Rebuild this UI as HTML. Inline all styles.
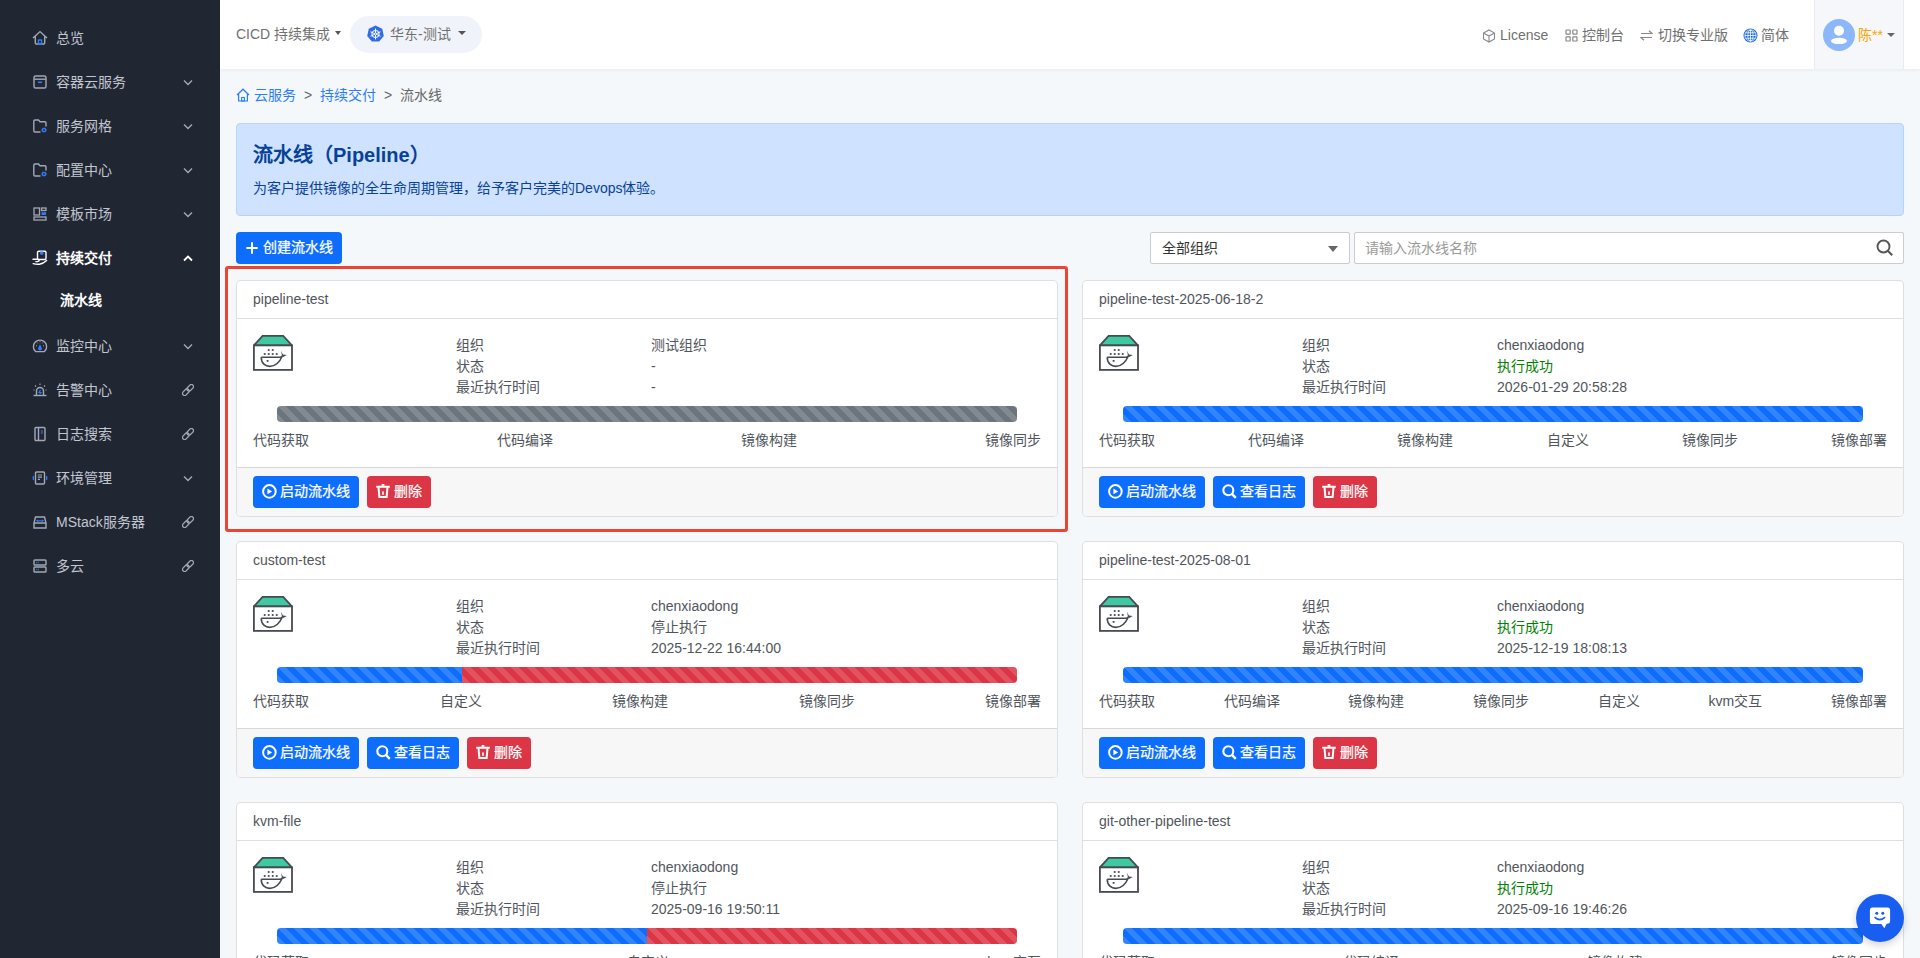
<!DOCTYPE html>
<html lang="zh-CN"><head><meta charset="utf-8">
<style>
*{box-sizing:border-box;margin:0;padding:0}
html,body{width:1920px;height:958px;overflow:hidden}
body{font-family:"Liberation Sans",sans-serif;font-size:14px;background:#f5f8fb;position:relative;color:#50555c}
.abs{position:absolute}
svg{display:block}
#side{left:0;top:0;width:220px;height:958px;background:#212633}
.mi{position:absolute;left:0;width:220px;height:22px;color:#c1c6d0;font-size:14px;line-height:22px;white-space:nowrap}
.mi .ic{position:absolute;left:32px;top:3px}
.mi .tx{position:absolute;left:56px;top:0}
.mi .ch{position:absolute;left:183px;top:8px}
.mi .lk{position:absolute;left:182px;top:5px}
.mi.act{color:#fff;font-weight:bold}
#hdr{left:220px;top:0;width:1700px;height:69px;background:#fff;box-shadow:0 1px 4px rgba(0,0,0,.06)}
.ht{position:absolute;top:24px;line-height:20px;color:#707070;font-size:14px;white-space:nowrap}
.caret{position:absolute;width:0;height:0;border-left:3.5px solid transparent;border-right:3.5px solid transparent;border-top:4px solid #555}
.bc{position:absolute;top:85px;line-height:20px;font-size:14px;white-space:nowrap}
#jumbo{left:236px;top:123px;width:1668px;height:93px;background:#cfe2ff;border:1px solid #b6d4fe;border-radius:4px}
#jumbo .h1{position:absolute;left:16px;top:19px;font-size:20px;line-height:24px;font-weight:bold;color:#084298;white-space:nowrap}
#jumbo .p{position:absolute;left:16px;top:54px;font-size:14px;line-height:20px;color:#084298;white-space:nowrap}
.btn{position:absolute;height:32px;border-radius:4px;color:#fff;font-size:14px;line-height:21px;padding:5px 9px 5px 8px;white-space:nowrap}
.btn svg{display:inline-block;vertical-align:-3px;margin-right:3px;margin-left:1px}
.bp{background:#0d6efd}
.btn{-webkit-text-stroke:0.25px #fff}
.bd{background:#dc3545}
.card{position:absolute;width:822px;height:237px;background:#fff;border:1px solid rgba(0,0,0,.125);border-radius:5px;overflow:hidden}
.card .hd{position:absolute;left:0;top:0;width:100%;height:38px;border-bottom:1px solid rgba(0,0,0,.125);padding:8px 16px;line-height:21px;color:#50555c;white-space:nowrap}
.card .ft{position:absolute;left:0;top:186px;width:100%;height:51px;border-top:1px solid rgba(0,0,0,.125);background:#f7f7f7}
.card .logo{position:absolute;left:16px;top:54px}
.card .lb{position:absolute;left:219px;line-height:21px;white-space:nowrap}
.card .vl{position:absolute;left:414px;line-height:21px;white-space:nowrap}
.ok{color:#008000}
.prog{position:absolute;left:40px;top:125px;width:740px;height:16px;border-radius:4px;overflow:hidden;background:#e9ecef;display:flex}
.prog div{height:16px;background-image:linear-gradient(45deg,rgba(255,255,255,.15) 25%,transparent 25%,transparent 50%,rgba(255,255,255,.15) 50%,rgba(255,255,255,.15) 75%,transparent 75%,transparent);background-size:16px 16px}
.pg{background-color:#6c757d}
.pb{background-color:#0d6efd}
.pr{background-color:#dc3545}
.steps{position:absolute;left:16px;top:149px;width:788px;display:flex;justify-content:space-between;line-height:21px;white-space:nowrap}
.card .btn{top:8px}
</style></head><body>

<div id="side" class="abs">
<div class="mi" style="top:27px"><div class="ic"><svg width="16" height="16" viewBox="0 0 16 16" ><path d="M1 8 L8 1.6 L15 8 M3.3 6.3 V13 Q3.3 14 4.3 14 H11.7 Q12.7 14 12.7 13 V6.3" fill="none" stroke="#a3a9b4" stroke-width="1.4"/><rect x="6.5" y="10" width="3" height="4" fill="none" stroke="#2f7cf6" stroke-width="1.4"/></svg></div><div class="tx">总览</div></div>
<div class="mi" style="top:71px"><div class="ic"><svg width="16" height="16" viewBox="0 0 16 16" ><rect x="2" y="2" width="12" height="12" rx="1.6" fill="none" stroke="#a3a9b4" stroke-width="1.4"/><path d="M2 5.2 H14" stroke="#a3a9b4" stroke-width="1.4"/><path d="M6 8.3 H10" stroke="#2f7cf6" stroke-width="1.6"/></svg></div><div class="tx">容器云服务</div><div class="ch"><svg width="10" height="7" viewBox="0 0 10 7" ><path d="M1 1.5 L5 5.5 L9 1.5" fill="none" stroke="#a3a9b4" stroke-width="1.4"/></svg></div></div>
<div class="mi" style="top:115px"><div class="ic"><svg width="16" height="16" viewBox="0 0 16 16" ><path d="M8.5 14 H3 Q1.8 14 1.8 12.8 V3.2 Q1.8 2 3 2 H6.5 L8 3.8 H12.8 Q14 3.8 14 5 V8.5" fill="none" stroke="#a3a9b4" stroke-width="1.4"/><path d="M10.6 9.8 H13.4 L14.8 12 L13.4 14.2 H10.6 L9.2 12 Z" fill="#2f7cf6"/><circle cx="12" cy="12" r="0.9" fill="#212633"/></svg></div><div class="tx">服务网格</div><div class="ch"><svg width="10" height="7" viewBox="0 0 10 7" ><path d="M1 1.5 L5 5.5 L9 1.5" fill="none" stroke="#a3a9b4" stroke-width="1.4"/></svg></div></div>
<div class="mi" style="top:159px"><div class="ic"><svg width="16" height="16" viewBox="0 0 16 16" ><path d="M8.5 14 H3 Q1.8 14 1.8 12.8 V3.2 Q1.8 2 3 2 H6.5 L8 3.8 H12.8 Q14 3.8 14 5 V8.5" fill="none" stroke="#a3a9b4" stroke-width="1.4"/><path d="M10.6 9.8 H13.4 L14.8 12 L13.4 14.2 H10.6 L9.2 12 Z" fill="#2f7cf6"/><circle cx="12" cy="12" r="0.9" fill="#212633"/></svg></div><div class="tx">配置中心</div><div class="ch"><svg width="10" height="7" viewBox="0 0 10 7" ><path d="M1 1.5 L5 5.5 L9 1.5" fill="none" stroke="#a3a9b4" stroke-width="1.4"/></svg></div></div>
<div class="mi" style="top:203px"><div class="ic"><svg width="16" height="16" viewBox="0 0 16 16" ><rect x="2" y="2" width="5.5" height="7" fill="none" stroke="#a3a9b4" stroke-width="1.3"/><rect x="9.5" y="2" width="4.5" height="2.5" fill="none" stroke="#a3a9b4" stroke-width="1.3"/><rect x="9.5" y="6.2" width="4.5" height="2.8" fill="#2f7cf6"/><rect x="2" y="11" width="12" height="3" fill="none" stroke="#a3a9b4" stroke-width="1.3"/></svg></div><div class="tx">模板市场</div><div class="ch"><svg width="10" height="7" viewBox="0 0 10 7" ><path d="M1 1.5 L5 5.5 L9 1.5" fill="none" stroke="#a3a9b4" stroke-width="1.4"/></svg></div></div>
<div class="mi act" style="top:247px"><div class="ic"><svg width="16" height="16" viewBox="0 0 16 16" ><rect x="5.5" y="1.2" width="8.5" height="8.3" rx="1.3" fill="none" stroke="#fff" stroke-width="1.4"/><path d="M8 1.6 H11.5 V3.2 A1.75 1.75 0 0 1 8 3.2 Z" fill="#2f7cf6"/><path d="M1 9.3 H5.2 Q7.2 9.3 7.2 10.6 Q7.2 11.6 5.2 11.6 H3.8 M1.2 13.6 Q4 14.4 7.5 14.2 Q11 14 14.6 10.6" fill="none" stroke="#fff" stroke-width="1.4" stroke-linecap="round"/></svg></div><div class="tx">持续交付</div><div class="ch"><svg width="10" height="7" viewBox="0 0 10 7" ><path d="M1 5.5 L5 1.5 L9 5.5" fill="none" stroke="#fff" stroke-width="1.8"/></svg></div></div>
<div class="mi" style="top:335px"><div class="ic"><svg width="16" height="16" viewBox="0 0 16 16" ><path d="M3.6 13.6 A6.6 6.6 0 1 1 12.4 13.6 Z" fill="none" stroke="#a3a9b4" stroke-width="1.4"/><path d="M8 6.2 L9.9 10 A2 2 0 1 1 6.1 10 Z" fill="#2f7cf6"/><path d="M4 7.5 L4.9 8 M8 3.3 V4.3 M12 7.5 L11.1 8 M5.2 4.6 L5.8 5.3 M10.8 4.6 L10.2 5.3" stroke="#a3a9b4" stroke-width="1"/></svg></div><div class="tx">监控中心</div><div class="ch"><svg width="10" height="7" viewBox="0 0 10 7" ><path d="M1 1.5 L5 5.5 L9 1.5" fill="none" stroke="#a3a9b4" stroke-width="1.4"/></svg></div></div>
<div class="mi" style="top:379px"><div class="ic"><svg width="16" height="16" viewBox="0 0 16 16" ><path d="M4.5 13 V9 A3.5 3.5 0 0 1 11.5 9 V13" fill="none" stroke="#a3a9b4" stroke-width="1.4"/><path d="M1.5 13.5 H14.5" stroke="#a3a9b4" stroke-width="1.4"/><path d="M8.5 8 L7 10.5 H9 L7.5 12.5" fill="none" stroke="#2f7cf6" stroke-width="1.1"/><path d="M3 3.5 L4 4.5 M8 1.5 V3 M13 3.5 L12 4.5 M1.5 8 H2.5 M13.5 8 H14.5" stroke="#a3a9b4" stroke-width="1.1"/></svg></div><div class="tx">告警中心</div><div class="lk"><svg width="12" height="12" viewBox="0 0 12 12" ><g fill="none" stroke="#a3a9b4" stroke-width="1.3"><rect x="0.05" y="6.1" width="7.5" height="4.2" rx="2.1" transform="rotate(-45 3.8 8.2)"/><rect x="4.45" y="1.7" width="7.5" height="4.2" rx="2.1" transform="rotate(-45 8.2 3.8)"/></g></svg></div></div>
<div class="mi" style="top:423px"><div class="ic"><svg width="16" height="16" viewBox="0 0 16 16" ><rect x="3" y="1.5" width="10" height="13" rx="1" fill="none" stroke="#a3a9b4" stroke-width="1.4"/><path d="M6.5 1.5 V14.5" stroke="#a3a9b4" stroke-width="1.4"/><path d="M8.8 5 H11 M8.8 7 H11" stroke="#2f7cf6" stroke-width="1.2"/></svg></div><div class="tx">日志搜索</div><div class="lk"><svg width="12" height="12" viewBox="0 0 12 12" ><g fill="none" stroke="#a3a9b4" stroke-width="1.3"><rect x="0.05" y="6.1" width="7.5" height="4.2" rx="2.1" transform="rotate(-45 3.8 8.2)"/><rect x="4.45" y="1.7" width="7.5" height="4.2" rx="2.1" transform="rotate(-45 8.2 3.8)"/></g></svg></div></div>
<div class="mi" style="top:467px"><div class="ic"><svg width="16" height="16" viewBox="0 0 16 16" ><rect x="3.5" y="2" width="9" height="12" rx="1" fill="none" stroke="#a3a9b4" stroke-width="1.4"/><path d="M5.8 5 H10 M5.8 7.2 H10 M5.8 9.4 H8" stroke="#a3a9b4" stroke-width="1.2"/><path d="M1.6 6 Q0.8 8 1.6 10 M14.4 6 Q15.2 8 14.4 10" fill="none" stroke="#2f7cf6" stroke-width="1.4"/></svg></div><div class="tx">环境管理</div><div class="ch"><svg width="10" height="7" viewBox="0 0 10 7" ><path d="M1 1.5 L5 5.5 L9 1.5" fill="none" stroke="#a3a9b4" stroke-width="1.4"/></svg></div></div>
<div class="mi" style="top:511px"><div class="ic"><svg width="16" height="16" viewBox="0 0 16 16" ><path d="M2 9 L3.5 3 H12.5 L14 9 V14 H2 Z M2 9 H14" fill="none" stroke="#a3a9b4" stroke-width="1.4"/><path d="M6 6 L5 6.8 L6 7.6 M10 6 L11 6.8 L10 7.6 M5.2 6.8 H10.8" fill="none" stroke="#2f7cf6" stroke-width="1.3"/></svg></div><div class="tx">MStack服务器</div><div class="lk"><svg width="12" height="12" viewBox="0 0 12 12" ><g fill="none" stroke="#a3a9b4" stroke-width="1.3"><rect x="0.05" y="6.1" width="7.5" height="4.2" rx="2.1" transform="rotate(-45 3.8 8.2)"/><rect x="4.45" y="1.7" width="7.5" height="4.2" rx="2.1" transform="rotate(-45 8.2 3.8)"/></g></svg></div></div>
<div class="mi" style="top:555px"><div class="ic"><svg width="16" height="16" viewBox="0 0 16 16" ><rect x="2" y="2" width="12" height="5" rx="0.8" fill="none" stroke="#a3a9b4" stroke-width="1.4"/><rect x="2" y="9" width="12" height="5" rx="0.8" fill="none" stroke="#a3a9b4" stroke-width="1.4"/><path d="M4.3 4.5 H5.3 M6.3 4.5 H7 M4.3 11.5 H5.3 M6.3 11.5 H7" stroke="#2f7cf6" stroke-width="1.3"/></svg></div><div class="tx">多云</div><div class="lk"><svg width="12" height="12" viewBox="0 0 12 12" ><g fill="none" stroke="#a3a9b4" stroke-width="1.3"><rect x="0.05" y="6.1" width="7.5" height="4.2" rx="2.1" transform="rotate(-45 3.8 8.2)"/><rect x="4.45" y="1.7" width="7.5" height="4.2" rx="2.1" transform="rotate(-45 8.2 3.8)"/></g></svg></div></div>
<div class="mi act" style="top:289px"><div class="tx" style="left:60px">流水线</div></div>
</div>
<div id="hdr" class="abs">
<div class="ht" style="left:16px">CICD 持续集成</div><div class="caret" style="left:115px;top:31px"></div>
<div class="abs" style="left:130px;top:16px;width:132px;height:37px;border-radius:19px;background:#f0f4fa"></div>
<div class="abs" style="left:147px;top:25px"><svg width="17" height="17" viewBox="0 0 17 17" ><path d="M8.5 0.6 L15.2 3.8 L16.8 11 L12.2 16.6 H4.8 L0.2 11 L1.8 3.8 Z" fill="#326ce5"/><g fill="none" stroke="#fff" stroke-width="1"><circle cx="8.5" cy="9" r="3.6"/><path d="M8.5 3.6 V14.4 M3.5 6.8 L13.5 11.2 M13.5 6.8 L3.5 11.2"/></g><circle cx="8.5" cy="9" r="1.1" fill="#326ce5" stroke="#fff" stroke-width="0.8"/></svg></div>
<div class="ht" style="left:170px">华东-测试</div><div class="caret" style="left:238px;top:31px;border-left-width:4px;border-right-width:4px"></div>
<div class="abs" style="left:1262px;top:29px"><svg width="14" height="14" viewBox="0 0 14 14" ><g fill="none" stroke="#888" stroke-width="1.1"><path d="M7 1 L12.5 4 V10 L7 13 L1.5 10 V4 Z M1.5 4 L7 7 L12.5 4 M7 7 V13"/></g></svg></div><div class="ht" style="left:1280px;top:25px">License</div>
<div class="abs" style="left:1345px;top:29px"><svg width="13" height="13" viewBox="0 0 13 13" ><g fill="none" stroke="#888" stroke-width="1.2"><rect x="1" y="1" width="4.2" height="4.2" rx="0.6"/><rect x="7.8" y="1" width="4.2" height="4.2" rx="0.6"/><rect x="1" y="7.8" width="4.2" height="4.2" rx="0.6"/><rect x="7.8" y="7.8" width="4.2" height="4.2" rx="0.6"/></g></svg></div><div class="ht" style="left:1362px;top:25px">控制台</div>
<div class="abs" style="left:1420px;top:29px"><svg width="13" height="13" viewBox="0 0 13 13" ><g fill="none" stroke="#888" stroke-width="1.2"><path d="M1 4.5 H12 L9 1.8 M12 8.5 H1 L4 11.2"/></g></svg></div><div class="ht" style="left:1438px;top:25px">切换专业版</div>
<div class="abs" style="left:1523px;top:28px"><svg width="15" height="15" viewBox="0 0 15 15" ><circle cx="7.5" cy="7.5" r="7" fill="#1a66e8"/><g fill="none" stroke="#fff" stroke-width="0.8"><circle cx="7.5" cy="7.5" r="5.6"/><ellipse cx="7.5" cy="7.5" rx="2.6" ry="5.6"/><path d="M7.5 1.9 V13.1 M1.9 7.5 H13.1 M2.6 4.8 H12.4 M2.6 10.2 H12.4"/></g></svg></div><div class="ht" style="left:1541px;top:25px">简体</div>
<div class="abs" style="left:1594px;top:0;width:90px;height:69px;background:#f5f7fa;border-left:1px solid #e8ebf0;border-right:1px solid #e8ebf0"></div>
<div class="abs" style="left:1603px;top:19px"><svg width="32" height="32" viewBox="0 0 32 32" ><circle cx="16" cy="16" r="16" fill="#8cb8fb"/><circle cx="16" cy="11.7" r="5" fill="#fff"/><ellipse cx="16" cy="21.9" rx="8" ry="3.2" fill="#fff"/></svg></div>
<div class="ht" style="left:1638px;top:25px;color:#f7a800">陈**</div><div class="caret" style="left:1667px;top:33px;border-left-width:4px;border-right-width:4px;border-top-color:#666"></div>
</div>
<div class="abs" style="left:236px;top:88px"><svg width="14" height="14" viewBox="0 0 14 14" ><path d="M1 7 L7 1.2 L13 7 M2.6 5.6 V13 H11.4 V5.6" fill="none" stroke="#2b7cfb" stroke-width="1.2"/><rect x="5.6" y="9.5" width="2.8" height="3.5" fill="none" stroke="#2b7cfb" stroke-width="1.1"/></svg></div>
<div class="bc" style="left:254px;color:#2b7cfb">云服务</div>
<div class="bc" style="left:304px;color:#666">&gt;</div>
<div class="bc" style="left:320px;color:#2b7cfb">持续交付</div>
<div class="bc" style="left:384px;color:#666">&gt;</div>
<div class="bc" style="left:400px;color:#666">流水线</div>
<div id="jumbo" class="abs"><div class="h1">流水线（Pipeline）</div><div class="p">为客户提供镜像的全生命周期管理，给予客户完美的Devops体验。</div></div>
<div class="btn bp" style="left:236px;top:232px;width:106px;height:32px;padding:5px 9px 5px 10px"><svg width="12" height="12" viewBox="0 0 12 12" style="margin:0 5px 0 0;vertical-align:-2px"><path d="M6 0.3 V11.7 M0.3 6 H11.7" stroke="#fff" stroke-width="1.9"/></svg>创建流水线</div>
<div class="abs" style="left:1150px;top:232px;width:200px;height:32px;background:#fff;border:1px solid #ccc;border-radius:2px"></div>
<div class="abs" style="left:1162px;top:238px;line-height:20px;color:#333">全部组织</div>
<div class="caret" style="left:1328px;top:246px;border-top-color:#666;border-left-width:5px;border-right-width:5px;border-top-width:6px"></div>
<div class="abs" style="left:1354px;top:232px;width:550px;height:32px;background:#fff;border:1px solid #ccc;border-radius:2px"></div>
<div class="abs" style="left:1365px;top:238px;line-height:20px;color:#999">请输入流水线名称</div>
<div class="abs" style="left:1876px;top:239px"><svg width="18" height="18" viewBox="0 0 18 18" ><circle cx="7.5" cy="7.5" r="6" fill="none" stroke="#555" stroke-width="1.9"/><path d="M11.8 11.8 L16.2 16.2" stroke="#555" stroke-width="2"/></svg></div>
<div class="card" style="left:236px;top:280px">
<div class="hd">pipeline-test</div>
<div class="logo"><svg width="40" height="36" viewBox="0 0 40 36" ><path d="M0.9 10.4 L9.6 0.9 H30.2 L39 10.4 Z" fill="#3ec9a3" stroke="#464a52" stroke-width="1.8"/><rect x="0.9" y="10.4" width="38.1" height="24.5" fill="#fff" stroke="#464a52" stroke-width="1.8"/><g fill="#464a52"><rect x="14.8" y="14.1" width="1.8" height="1.8"/><rect x="18.8" y="14.1" width="1.8" height="1.8"/><rect x="10.8" y="18.1" width="1.8" height="1.8"/><rect x="14.8" y="18.1" width="1.8" height="1.8"/><rect x="18.8" y="18.1" width="1.8" height="1.8"/><rect x="22.8" y="18.1" width="1.8" height="1.8"/><rect x="13.7" y="25" width="1.8" height="1.8"/></g><path d="M8.2 22.3 H26.5 Q28.8 22.3 29.6 20.5 M8.2 22.3 C8.2 28.5 12.5 31.4 16.8 31.4 C22.5 31.4 26.5 27.5 29.6 20.5" fill="none" stroke="#464a52" stroke-width="1.6"/><path d="M28.1 15.8 L29.9 19.6 L33.8 20.1 L30.2 21.9 L28.9 20.6 Z" fill="#464a52"/></svg></div>
<div class="lb" style="top:54px">组织</div><div class="lb" style="top:75px">状态</div><div class="lb" style="top:96px">最近执行时间</div>
<div class="vl" style="top:54px">测试组织</div><div class="vl " style="top:75px">-</div><div class="vl" style="top:96px">-</div>
<div class="prog"><div class="pg" style="width:100%"></div></div>
<div class="steps"><span>代码获取</span><span>代码编译</span><span>镜像构建</span><span>镜像同步</span></div>
<div class="ft">
<div class="btn bp" style="left:16px"><svg width="15" height="15" viewBox="0 0 15 15" ><circle cx="7.4" cy="7.4" r="6.3" fill="none" stroke="#fff" stroke-width="2"/><path d="M5.4 4.6 L10.2 7.4 L5.4 10.2 Z" fill="#fff"/></svg>启动流水线</div>
<div class="btn bd" style="left:130px"><svg width="14" height="14" viewBox="0 0 15 15" style="margin-right:4px;vertical-align:-2px"><path d="M0.2 2.9 H14.8" stroke="#fff" stroke-width="2.2"/><rect x="6" y="0" width="3" height="2" fill="#fff"/><path d="M2.7 3.5 L3.6 13.9 H11.4 L12.3 3.5" fill="none" stroke="#fff" stroke-width="2.2"/><rect x="6.6" y="8" width="1.8" height="3.6" fill="#fff"/></svg>删除</div>
</div></div>
<div class="card" style="left:1082px;top:280px">
<div class="hd">pipeline-test-2025-06-18-2</div>
<div class="logo"><svg width="40" height="36" viewBox="0 0 40 36" ><path d="M0.9 10.4 L9.6 0.9 H30.2 L39 10.4 Z" fill="#3ec9a3" stroke="#464a52" stroke-width="1.8"/><rect x="0.9" y="10.4" width="38.1" height="24.5" fill="#fff" stroke="#464a52" stroke-width="1.8"/><g fill="#464a52"><rect x="14.8" y="14.1" width="1.8" height="1.8"/><rect x="18.8" y="14.1" width="1.8" height="1.8"/><rect x="10.8" y="18.1" width="1.8" height="1.8"/><rect x="14.8" y="18.1" width="1.8" height="1.8"/><rect x="18.8" y="18.1" width="1.8" height="1.8"/><rect x="22.8" y="18.1" width="1.8" height="1.8"/><rect x="13.7" y="25" width="1.8" height="1.8"/></g><path d="M8.2 22.3 H26.5 Q28.8 22.3 29.6 20.5 M8.2 22.3 C8.2 28.5 12.5 31.4 16.8 31.4 C22.5 31.4 26.5 27.5 29.6 20.5" fill="none" stroke="#464a52" stroke-width="1.6"/><path d="M28.1 15.8 L29.9 19.6 L33.8 20.1 L30.2 21.9 L28.9 20.6 Z" fill="#464a52"/></svg></div>
<div class="lb" style="top:54px">组织</div><div class="lb" style="top:75px">状态</div><div class="lb" style="top:96px">最近执行时间</div>
<div class="vl" style="top:54px">chenxiaodong</div><div class="vl ok" style="top:75px">执行成功</div><div class="vl" style="top:96px">2026-01-29 20:58:28</div>
<div class="prog"><div class="pb" style="width:100%"></div></div>
<div class="steps"><span>代码获取</span><span>代码编译</span><span>镜像构建</span><span>自定义</span><span>镜像同步</span><span>镜像部署</span></div>
<div class="ft">
<div class="btn bp" style="left:16px"><svg width="15" height="15" viewBox="0 0 15 15" ><circle cx="7.4" cy="7.4" r="6.3" fill="none" stroke="#fff" stroke-width="2"/><path d="M5.4 4.6 L10.2 7.4 L5.4 10.2 Z" fill="#fff"/></svg>启动流水线</div>
<div class="btn bp" style="left:130px"><svg width="15" height="15" viewBox="0 0 15 15" ><circle cx="6.3" cy="6.3" r="5" fill="none" stroke="#fff" stroke-width="2.1"/><path d="M9.9 9.9 L13.8 13.8" stroke="#fff" stroke-width="2.4"/></svg>查看日志</div>
<div class="btn bd" style="left:230px"><svg width="14" height="14" viewBox="0 0 15 15" style="margin-right:4px;vertical-align:-2px"><path d="M0.2 2.9 H14.8" stroke="#fff" stroke-width="2.2"/><rect x="6" y="0" width="3" height="2" fill="#fff"/><path d="M2.7 3.5 L3.6 13.9 H11.4 L12.3 3.5" fill="none" stroke="#fff" stroke-width="2.2"/><rect x="6.6" y="8" width="1.8" height="3.6" fill="#fff"/></svg>删除</div>
</div></div>
<div class="card" style="left:236px;top:541px">
<div class="hd">custom-test</div>
<div class="logo"><svg width="40" height="36" viewBox="0 0 40 36" ><path d="M0.9 10.4 L9.6 0.9 H30.2 L39 10.4 Z" fill="#3ec9a3" stroke="#464a52" stroke-width="1.8"/><rect x="0.9" y="10.4" width="38.1" height="24.5" fill="#fff" stroke="#464a52" stroke-width="1.8"/><g fill="#464a52"><rect x="14.8" y="14.1" width="1.8" height="1.8"/><rect x="18.8" y="14.1" width="1.8" height="1.8"/><rect x="10.8" y="18.1" width="1.8" height="1.8"/><rect x="14.8" y="18.1" width="1.8" height="1.8"/><rect x="18.8" y="18.1" width="1.8" height="1.8"/><rect x="22.8" y="18.1" width="1.8" height="1.8"/><rect x="13.7" y="25" width="1.8" height="1.8"/></g><path d="M8.2 22.3 H26.5 Q28.8 22.3 29.6 20.5 M8.2 22.3 C8.2 28.5 12.5 31.4 16.8 31.4 C22.5 31.4 26.5 27.5 29.6 20.5" fill="none" stroke="#464a52" stroke-width="1.6"/><path d="M28.1 15.8 L29.9 19.6 L33.8 20.1 L30.2 21.9 L28.9 20.6 Z" fill="#464a52"/></svg></div>
<div class="lb" style="top:54px">组织</div><div class="lb" style="top:75px">状态</div><div class="lb" style="top:96px">最近执行时间</div>
<div class="vl" style="top:54px">chenxiaodong</div><div class="vl " style="top:75px">停止执行</div><div class="vl" style="top:96px">2025-12-22 16:44:00</div>
<div class="prog"><div class="pb" style="width:25%"></div><div class="pr" style="width:75%"></div></div>
<div class="steps"><span>代码获取</span><span>自定义</span><span>镜像构建</span><span>镜像同步</span><span>镜像部署</span></div>
<div class="ft">
<div class="btn bp" style="left:16px"><svg width="15" height="15" viewBox="0 0 15 15" ><circle cx="7.4" cy="7.4" r="6.3" fill="none" stroke="#fff" stroke-width="2"/><path d="M5.4 4.6 L10.2 7.4 L5.4 10.2 Z" fill="#fff"/></svg>启动流水线</div>
<div class="btn bp" style="left:130px"><svg width="15" height="15" viewBox="0 0 15 15" ><circle cx="6.3" cy="6.3" r="5" fill="none" stroke="#fff" stroke-width="2.1"/><path d="M9.9 9.9 L13.8 13.8" stroke="#fff" stroke-width="2.4"/></svg>查看日志</div>
<div class="btn bd" style="left:230px"><svg width="14" height="14" viewBox="0 0 15 15" style="margin-right:4px;vertical-align:-2px"><path d="M0.2 2.9 H14.8" stroke="#fff" stroke-width="2.2"/><rect x="6" y="0" width="3" height="2" fill="#fff"/><path d="M2.7 3.5 L3.6 13.9 H11.4 L12.3 3.5" fill="none" stroke="#fff" stroke-width="2.2"/><rect x="6.6" y="8" width="1.8" height="3.6" fill="#fff"/></svg>删除</div>
</div></div>
<div class="card" style="left:1082px;top:541px">
<div class="hd">pipeline-test-2025-08-01</div>
<div class="logo"><svg width="40" height="36" viewBox="0 0 40 36" ><path d="M0.9 10.4 L9.6 0.9 H30.2 L39 10.4 Z" fill="#3ec9a3" stroke="#464a52" stroke-width="1.8"/><rect x="0.9" y="10.4" width="38.1" height="24.5" fill="#fff" stroke="#464a52" stroke-width="1.8"/><g fill="#464a52"><rect x="14.8" y="14.1" width="1.8" height="1.8"/><rect x="18.8" y="14.1" width="1.8" height="1.8"/><rect x="10.8" y="18.1" width="1.8" height="1.8"/><rect x="14.8" y="18.1" width="1.8" height="1.8"/><rect x="18.8" y="18.1" width="1.8" height="1.8"/><rect x="22.8" y="18.1" width="1.8" height="1.8"/><rect x="13.7" y="25" width="1.8" height="1.8"/></g><path d="M8.2 22.3 H26.5 Q28.8 22.3 29.6 20.5 M8.2 22.3 C8.2 28.5 12.5 31.4 16.8 31.4 C22.5 31.4 26.5 27.5 29.6 20.5" fill="none" stroke="#464a52" stroke-width="1.6"/><path d="M28.1 15.8 L29.9 19.6 L33.8 20.1 L30.2 21.9 L28.9 20.6 Z" fill="#464a52"/></svg></div>
<div class="lb" style="top:54px">组织</div><div class="lb" style="top:75px">状态</div><div class="lb" style="top:96px">最近执行时间</div>
<div class="vl" style="top:54px">chenxiaodong</div><div class="vl ok" style="top:75px">执行成功</div><div class="vl" style="top:96px">2025-12-19 18:08:13</div>
<div class="prog"><div class="pb" style="width:100%"></div></div>
<div class="steps"><span>代码获取</span><span>代码编译</span><span>镜像构建</span><span>镜像同步</span><span>自定义</span><span>kvm交互</span><span>镜像部署</span></div>
<div class="ft">
<div class="btn bp" style="left:16px"><svg width="15" height="15" viewBox="0 0 15 15" ><circle cx="7.4" cy="7.4" r="6.3" fill="none" stroke="#fff" stroke-width="2"/><path d="M5.4 4.6 L10.2 7.4 L5.4 10.2 Z" fill="#fff"/></svg>启动流水线</div>
<div class="btn bp" style="left:130px"><svg width="15" height="15" viewBox="0 0 15 15" ><circle cx="6.3" cy="6.3" r="5" fill="none" stroke="#fff" stroke-width="2.1"/><path d="M9.9 9.9 L13.8 13.8" stroke="#fff" stroke-width="2.4"/></svg>查看日志</div>
<div class="btn bd" style="left:230px"><svg width="14" height="14" viewBox="0 0 15 15" style="margin-right:4px;vertical-align:-2px"><path d="M0.2 2.9 H14.8" stroke="#fff" stroke-width="2.2"/><rect x="6" y="0" width="3" height="2" fill="#fff"/><path d="M2.7 3.5 L3.6 13.9 H11.4 L12.3 3.5" fill="none" stroke="#fff" stroke-width="2.2"/><rect x="6.6" y="8" width="1.8" height="3.6" fill="#fff"/></svg>删除</div>
</div></div>
<div class="card" style="left:236px;top:802px">
<div class="hd">kvm-file</div>
<div class="logo"><svg width="40" height="36" viewBox="0 0 40 36" ><path d="M0.9 10.4 L9.6 0.9 H30.2 L39 10.4 Z" fill="#3ec9a3" stroke="#464a52" stroke-width="1.8"/><rect x="0.9" y="10.4" width="38.1" height="24.5" fill="#fff" stroke="#464a52" stroke-width="1.8"/><g fill="#464a52"><rect x="14.8" y="14.1" width="1.8" height="1.8"/><rect x="18.8" y="14.1" width="1.8" height="1.8"/><rect x="10.8" y="18.1" width="1.8" height="1.8"/><rect x="14.8" y="18.1" width="1.8" height="1.8"/><rect x="18.8" y="18.1" width="1.8" height="1.8"/><rect x="22.8" y="18.1" width="1.8" height="1.8"/><rect x="13.7" y="25" width="1.8" height="1.8"/></g><path d="M8.2 22.3 H26.5 Q28.8 22.3 29.6 20.5 M8.2 22.3 C8.2 28.5 12.5 31.4 16.8 31.4 C22.5 31.4 26.5 27.5 29.6 20.5" fill="none" stroke="#464a52" stroke-width="1.6"/><path d="M28.1 15.8 L29.9 19.6 L33.8 20.1 L30.2 21.9 L28.9 20.6 Z" fill="#464a52"/></svg></div>
<div class="lb" style="top:54px">组织</div><div class="lb" style="top:75px">状态</div><div class="lb" style="top:96px">最近执行时间</div>
<div class="vl" style="top:54px">chenxiaodong</div><div class="vl " style="top:75px">停止执行</div><div class="vl" style="top:96px">2025-09-16 19:50:11</div>
<div class="prog"><div class="pb" style="width:50%"></div><div class="pr" style="width:50%"></div></div>
<div class="steps"><span>代码获取</span><span>自定义</span><span>kvm交互</span></div>
<div class="ft">
<div class="btn bp" style="left:16px"><svg width="15" height="15" viewBox="0 0 15 15" ><circle cx="7.4" cy="7.4" r="6.3" fill="none" stroke="#fff" stroke-width="2"/><path d="M5.4 4.6 L10.2 7.4 L5.4 10.2 Z" fill="#fff"/></svg>启动流水线</div>
<div class="btn bp" style="left:130px"><svg width="15" height="15" viewBox="0 0 15 15" ><circle cx="6.3" cy="6.3" r="5" fill="none" stroke="#fff" stroke-width="2.1"/><path d="M9.9 9.9 L13.8 13.8" stroke="#fff" stroke-width="2.4"/></svg>查看日志</div>
<div class="btn bd" style="left:230px"><svg width="14" height="14" viewBox="0 0 15 15" style="margin-right:4px;vertical-align:-2px"><path d="M0.2 2.9 H14.8" stroke="#fff" stroke-width="2.2"/><rect x="6" y="0" width="3" height="2" fill="#fff"/><path d="M2.7 3.5 L3.6 13.9 H11.4 L12.3 3.5" fill="none" stroke="#fff" stroke-width="2.2"/><rect x="6.6" y="8" width="1.8" height="3.6" fill="#fff"/></svg>删除</div>
</div></div>
<div class="card" style="left:1082px;top:802px">
<div class="hd">git-other-pipeline-test</div>
<div class="logo"><svg width="40" height="36" viewBox="0 0 40 36" ><path d="M0.9 10.4 L9.6 0.9 H30.2 L39 10.4 Z" fill="#3ec9a3" stroke="#464a52" stroke-width="1.8"/><rect x="0.9" y="10.4" width="38.1" height="24.5" fill="#fff" stroke="#464a52" stroke-width="1.8"/><g fill="#464a52"><rect x="14.8" y="14.1" width="1.8" height="1.8"/><rect x="18.8" y="14.1" width="1.8" height="1.8"/><rect x="10.8" y="18.1" width="1.8" height="1.8"/><rect x="14.8" y="18.1" width="1.8" height="1.8"/><rect x="18.8" y="18.1" width="1.8" height="1.8"/><rect x="22.8" y="18.1" width="1.8" height="1.8"/><rect x="13.7" y="25" width="1.8" height="1.8"/></g><path d="M8.2 22.3 H26.5 Q28.8 22.3 29.6 20.5 M8.2 22.3 C8.2 28.5 12.5 31.4 16.8 31.4 C22.5 31.4 26.5 27.5 29.6 20.5" fill="none" stroke="#464a52" stroke-width="1.6"/><path d="M28.1 15.8 L29.9 19.6 L33.8 20.1 L30.2 21.9 L28.9 20.6 Z" fill="#464a52"/></svg></div>
<div class="lb" style="top:54px">组织</div><div class="lb" style="top:75px">状态</div><div class="lb" style="top:96px">最近执行时间</div>
<div class="vl" style="top:54px">chenxiaodong</div><div class="vl ok" style="top:75px">执行成功</div><div class="vl" style="top:96px">2025-09-16 19:46:26</div>
<div class="prog"><div class="pb" style="width:100%"></div></div>
<div class="steps"><span>代码获取</span><span>代码编译</span><span>镜像构建</span><span>镜像同步</span></div>
<div class="ft">
<div class="btn bp" style="left:16px"><svg width="15" height="15" viewBox="0 0 15 15" ><circle cx="7.4" cy="7.4" r="6.3" fill="none" stroke="#fff" stroke-width="2"/><path d="M5.4 4.6 L10.2 7.4 L5.4 10.2 Z" fill="#fff"/></svg>启动流水线</div>
<div class="btn bp" style="left:130px"><svg width="15" height="15" viewBox="0 0 15 15" ><circle cx="6.3" cy="6.3" r="5" fill="none" stroke="#fff" stroke-width="2.1"/><path d="M9.9 9.9 L13.8 13.8" stroke="#fff" stroke-width="2.4"/></svg>查看日志</div>
<div class="btn bd" style="left:230px"><svg width="14" height="14" viewBox="0 0 15 15" style="margin-right:4px;vertical-align:-2px"><path d="M0.2 2.9 H14.8" stroke="#fff" stroke-width="2.2"/><rect x="6" y="0" width="3" height="2" fill="#fff"/><path d="M2.7 3.5 L3.6 13.9 H11.4 L12.3 3.5" fill="none" stroke="#fff" stroke-width="2.2"/><rect x="6.6" y="8" width="1.8" height="3.6" fill="#fff"/></svg>删除</div>
</div></div>
<div class="abs" style="left:225px;top:266px;width:843px;height:266px;border:3px solid #ee4433;border-radius:3px"></div>
<div class="abs" style="left:1856px;top:894px;border-radius:50%;box-shadow:0 3px 8px rgba(0,0,0,.18)"><svg width="48" height="48" viewBox="0 0 48 48" ><circle cx="24" cy="24" r="24" fill="#185ef0"/><path d="M16.5 13.6 H31.6 Q34.1 13.6 34.1 16.1 V26.8 Q34.1 29.6 31.3 29.8 L30.6 29.8 L28.4 34.3 L25.3 30 H16.5 Q13.9 30 13.9 27.4 V16.2 Q13.9 13.6 16.5 13.6 Z" fill="#fff"/><circle cx="20.8" cy="19.3" r="1.5" fill="#185ef0"/><circle cx="26.8" cy="19.3" r="1.5" fill="#185ef0"/><path d="M19.2 23.6 Q23.8 27.6 28.6 23.6" fill="none" stroke="#185ef0" stroke-width="1.7" stroke-linecap="round"/></svg></div>
</body></html>
